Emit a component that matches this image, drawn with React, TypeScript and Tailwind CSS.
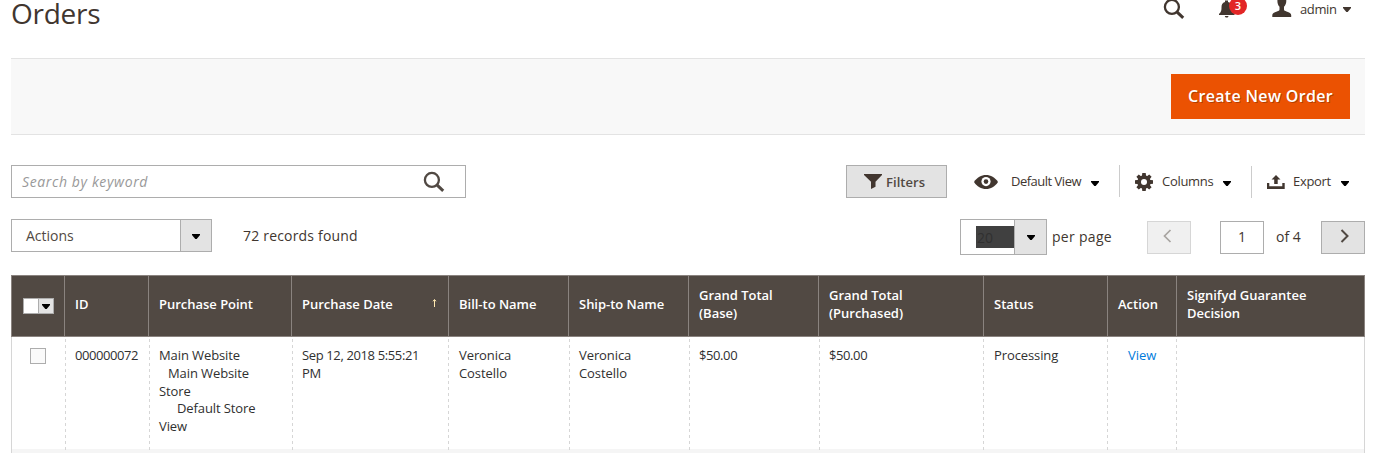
import React from "react";

const COLS = "grid grid-cols-[53px_84px_143px_157px_120px_120px_130px_165px_124px_69px_188px]";
const BODY_COLS = "grid grid-cols-[54px_84px_143px_156px_121px_120px_130px_164px_124px_69px_188px]";

function Caret({ className = "" }: { className?: string }) {
  return (
    <svg className={`shrink-0 ${className}`} width="8" height="5" viewBox="0 0 8 5" fill="currentColor">
      <path d="M0 0h8v1L4.700 5H3.300L0 1z" />
    </svg>
  );
}

function SearchIcon() {
  return (
    <svg width="22" height="22" viewBox="0 0 22 22" fill="none" stroke="currentColor" className="block">
      <circle cx="8.900" cy="8.900" r="7" strokeWidth="2.300" />
      <path d="M13.900 13.900l6.300 6" strokeWidth="3" />
    </svg>
  );
}

function TopBar() {
  return (
    <header className="flex h-[58px] items-start justify-between pr-[14px]">
      <h1 className="text-[28px] leading-[26px] tracking-[-0.25px] text-[#41362f]">Orders</h1>
      <div className="flex text-[#41362f]">
        <div className="-mt-[2px] mr-[34px]">
          <SearchIcon />
        </div>
        <div className="relative mr-[35px] w-[18px]">
          <svg width="16" height="19" viewBox="0 0 16 19" fill="currentColor" className="block">
            <path d="M6 .5h3V2c3 .7 4 2.600 4 5.500 0 3.500.5 4.500 2.500 6.500v1H0v-1c2-2 2.500-3 2.500-6.500C2.500 4.600 3.200 2.700 6 2z" />
            <path d="M5.800 16h3.700c-.2 1-.8 1.600-1.800 1.600S6 17 5.800 16z" />
          </svg>
          <span className="absolute -top-[3px] left-[10px] flex h-[18px] w-[18px] items-center justify-center rounded-full bg-[#e22626] text-[11px] font-semibold text-white">
            3
          </span>
        </div>
        <svg width="20" height="17" viewBox="0 0 20 17" fill="currentColor" className="mr-[8px] block">
          <path d="M10-4c3 0 4.300 2 4.300 5 0 2.500-1 4.500-2.300 5.800v2.700c0 1 1 1.400 2.500 2 3 1 4.700 1.800 4.700 3.500v2H.3v-2c0-1.700 1.700-2.500 4.700-3.500 1.500-.6 2.500-1 2.500-2V6.800C6.200 5.500 5.400 3.500 5.400 1c0-3 1.600-5 4.600-5z" />
        </svg>
        <span className="w-[37px] text-[13px] leading-[18px] tracking-[-0.4px]">admin</span>
        <Caret className="mt-[7px] ml-[6px]" />
      </div>
    </header>
  );
}

function ToolItem({ icon, label, className }: { icon: React.ReactNode; label: string; className: string }) {
  return (
    <div className={`flex h-8 items-center text-[13px] text-[#41362f] ${className}`}>
      {icon}
      <span className="whitespace-nowrap">{label}</span>
      <Caret className="mt-[2px] ml-auto text-black" />
    </div>
  );
}

function Toolbar() {
  return (
    <div className="mt-[30px] flex h-[33px] items-start">
      <div className="flex h-[33px] w-[455px] items-center justify-between border border-[#adadad] pr-5 pl-[10px]">
        <span className="text-[14px] tracking-[0.62px] text-[#999] italic">Search by keyword</span>
        <div className="text-[#514943]">
          <SearchIcon />
        </div>
      </div>
      <button className="ml-[380px] flex h-[33px] w-[101px] items-center border border-[#adadad] bg-[#e3e3e3] pt-[2px] pl-[17px] text-[13px] font-semibold text-[#514943]">
        <svg width="18" height="15" viewBox="0 0 18 15" fill="#41362f" className="-mt-[2px] mr-[4px]">
          <path d="M0 0h18v1l-6.500 6.700v5L7 15V7.700L0 1z" />
        </svg>
        <span className="tracking-[0.05px]">Filters</span>
      </button>
      <ToolItem
        className="ml-[27px] w-[125px] pt-[2px] tracking-[-0.5px]"
        label="Default View"
        icon={
          <svg width="24" height="14" viewBox="0 0 24 14" className="-mt-px mr-[13px] shrink-0">
            <path d="M0 7C3 2.300 7.300 0 12 0s9 2.300 12 7c-3 4.700-7.300 7-12 7S3 11.700 0 7z" fill="#41362f" />
            <circle cx="12" cy="6.600" r="4.600" fill="#fff" />
            <circle cx="12" cy="6.600" r="2.300" fill="#41362f" />
          </svg>
        }
      />
      <ToolItem
        className="ml-[20px] w-[112px] border-l border-[#ccc] pt-[2px] pl-[15px] tracking-[-0.3px]"
        label="Columns"
        icon={
          <svg width="18" height="18" viewBox="0 0 18 18" className="mr-[9px] shrink-0">
            <g fill="#41362f">
              <circle cx="9" cy="9" r="6.700" />
              <path d="M7.300 0h3.400l.5 4H6.800zM7.300 18h3.400l.5-4H6.800zM0 7.300v3.400l4 .5V6.800zM18 7.300v3.400l-4 .5V6.800z" />
              <path d="M1.400 3.800l2.400-2.400L7 3.900 3.900 7zM16.600 3.800l-2.400-2.400L11 3.900 14.100 7zM1.400 14.200l2.400 2.400L7 14.100 3.900 11zM16.600 14.200l-2.400 2.400L11 14.100l3.100-3.100z" />
            </g>
            <circle cx="9" cy="9" r="3" fill="#fff" />
          </svg>
        }
      />
      <ToolItem
        className="mt-px ml-[20px] w-[98px] border-l border-[#ccc] pl-[15px] tracking-[-0.3px]"
        label="Export"
        icon={
          <svg width="18" height="14" viewBox="0 0 18 14" fill="#41362f" className="-mt-px mr-[8px] shrink-0">
            <path d="M9 0l4.500 4.500h-2.800V9H7.200V4.500H4.500zM0 8h2.300v3.300h13V8h2.400v6H0z" />
          </svg>
        }
      />
    </div>
  );
}

function ActionRow() {
  return (
    <div className="mt-[21px] flex h-[56px] text-[14px] text-[#41362f]">
      <div className="flex h-[33px] w-[201px] border border-[#adadad]">
        <span className="flex-1 pl-[14px] leading-[32px] text-[#514943]">Actions</span>
        <span className="flex w-[31px] items-center justify-center border-l border-[#adadad] bg-[#e3e3e3] text-black">
          <Caret className="mt-[2px]" />
        </span>
      </div>
      <span className="ml-[31px] w-[717px] leading-[34px] tracking-[0.19px]">72 records found</span>
      <div className="flex h-[36px] w-[87px] border border-[#adadad]">
        <span className="mt-[6px] ml-[15px] h-[22px] flex-1 bg-[#404040] pl-px leading-[23px] text-[#303030]">20</span>
        <span className="flex w-[32px] items-center justify-center border-l border-[#adadad] bg-[#e3e3e3] text-black">
          <Caret className="mt-px" />
        </span>
      </div>
      <span className="ml-[5px] w-[95px] leading-[36px] tracking-[0.3px]">per page</span>
      <button className="mt-[2px] flex h-[33px] w-[44px] items-center justify-center border border-[#d6d6d6] bg-[#f0f0f0] text-[#a8a4a1]">
        <svg width="9" height="14" viewBox="0 0 9 14" fill="none" stroke="currentColor" strokeWidth="1.700" className="-mt-[3px] -ml-[3px]">
          <path d="M7.500 1L1.500 7l6 6" />
        </svg>
      </button>
      <div className="mt-[2px] ml-[29px] h-[33px] w-[44px] border border-[#adadad] text-center leading-[30px]">1</div>
      <span className="ml-[12px] w-[45px] leading-[36px]">of 4</span>
      <button className="mt-[2px] flex h-[33px] w-[44px] items-center justify-center border border-[#adadad] bg-[#e3e3e3] text-[#514943]">
        <svg width="9" height="14" viewBox="0 0 9 14" fill="none" stroke="currentColor" strokeWidth="2" className="-mt-[3px] ml-[2px]">
          <path d="M1.500 1l6 6-6 6" />
        </svg>
      </button>
    </div>
  );
}

function Head({ children, className = "pb-[4px]" }: { children: React.ReactNode; className?: string }) {
  return (
    <div className={`flex items-center border-l border-[#8a837f] pl-[10px] text-[13px] leading-[18px] font-semibold tracking-[-0.02px] text-white ${className}`}>
      {children}
    </div>
  );
}

function Cell({ children, className = "", first = false }: { children?: React.ReactNode; className?: string; first?: boolean }) {
  return (
    <div className={`relative pt-[10.3px] text-[13px] leading-[17.68px] text-[#303030] ${className}`}>
      {!first && (
        <svg width="1" height="113" className="absolute top-0 left-0">
          <path d="M.5 0v113" stroke="#d6d6d6" strokeDasharray="3 3" strokeDashoffset="4" />
        </svg>
      )}
      {children}
    </div>
  );
}

function OrdersTable() {
  return (
    <div className="w-[1354px]">
      <div className={`${COLS} h-[62px] border-y border-r border-[#8a837f] bg-[#514943]`}>
        <Head className="pb-0">
          <span className="ml-px flex h-4 w-[31px] border border-[#adadad] bg-white">
            <span className="ml-auto flex w-[15px] items-center justify-center border-l border-[#adadad] bg-[#e3e3e3] text-black">
              <Caret className="mt-px" />
            </span>
          </span>
        </Head>
        <Head>ID</Head>
        <Head>Purchase Point</Head>
        <Head>
          Purchase Date
          <svg width="5" height="8" viewBox="0 0 5 8" fill="none" stroke="#ffe8b0" className="mr-[11px] -mt-[2px] ml-auto">
            <path d="M2.500 .7V8M.8 2.300l1.700-1.600 1.700 1.600" />
          </svg>
        </Head>
        <Head>Bill-to Name</Head>
        <Head>Ship-to Name</Head>
        <Head>Grand Total<br />(Base)</Head>
        <Head>Grand Total<br />(Purchased)</Head>
        <Head>Status</Head>
        <Head>Action</Head>
        <Head>Signifyd Guarantee<br />Decision</Head>
      </div>
      <div className="border-x border-[#d6d6d6]">
        <div className={`${BODY_COLS} -ml-px h-[112px] w-[1353px]`}>
          <Cell first>
            <span className="mt-px ml-[19px] block h-4 w-4 border border-[#adadad] bg-[#fafafa]" />
          </Cell>
          <Cell className="pl-[10px] tracking-[-0.44px]">000000072</Cell>
          <Cell className="pl-[10px] tracking-[-0.1px] whitespace-pre">{"Main Website\n"}<span className="pl-[9px]">{"Main Website\n"}</span>{"Store\n"}<span className="pl-[18px]">{"Default Store\n"}</span>View</Cell>
          <Cell className="pl-[10px] tracking-[-0.37px]">Sep 12, 2018 5:55:21<br />PM</Cell>
          <Cell className="pl-[11px] tracking-[-0.08px]">Veronica<br />Costello</Cell>
          <Cell className="pl-[10px] tracking-[-0.08px]">Veronica<br />Costello</Cell>
          <Cell className="pl-[10px] tracking-[-0.4px]">$50.00</Cell>
          <Cell className="pl-[10px] tracking-[-0.4px]">$50.00</Cell>
          <Cell className="pl-[11px] tracking-[-0.1px]">Processing</Cell>
          <Cell className="pl-[21px]"><a className="text-[#007bdb]">View</a></Cell>
          <Cell />
        </div>
        <div className="h-[4px] bg-[#f5f5f5]" />
      </div>
    </div>
  );
}

export default function App() {
  return (
    <div className="h-[453px] w-[1373px] overflow-hidden bg-white pr-2 pl-[11px] font-['Open_Sans','Noto_Sans',sans-serif]">
      <TopBar />
      <div className="flex h-[77px] w-[1354px] items-center justify-end border-y border-[#e3e3e3] bg-[#f8f8f8] pr-[15px]">
        <button className="h-[45px] w-[179px] bg-[#eb5202] pb-px text-[16px] font-semibold tracking-[0.33px] text-white [text-shadow:1px_1px_0_rgba(0,0,0,0.25)]">
          Create New Order
        </button>
      </div>
      <Toolbar />
      <ActionRow />
      <OrdersTable />
    </div>
  );
}
